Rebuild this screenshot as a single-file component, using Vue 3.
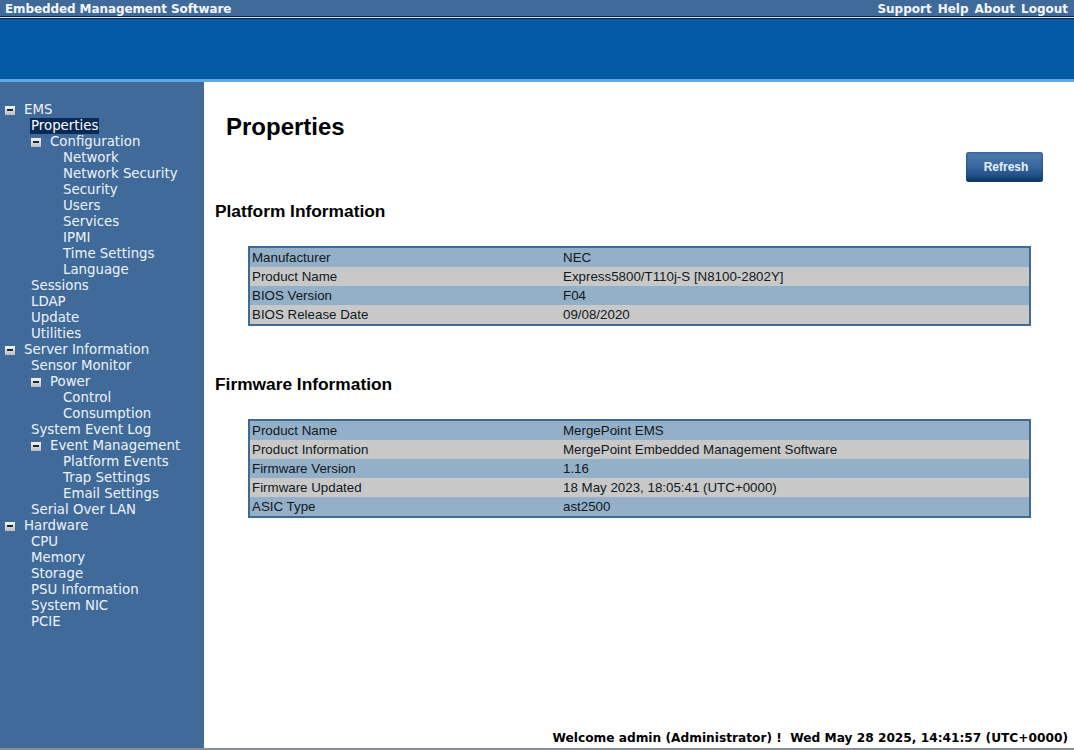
<script setup>
const tree = [
  { label: 'EMS', level: 0, toggle: true },
  { label: 'Properties', level: 1, selected: true },
  { label: 'Configuration', level: 1, toggle: true },
  { label: 'Network', level: 2 },
  { label: 'Network Security', level: 2 },
  { label: 'Security', level: 2 },
  { label: 'Users', level: 2 },
  { label: 'Services', level: 2 },
  { label: 'IPMI', level: 2 },
  { label: 'Time Settings', level: 2 },
  { label: 'Language', level: 2 },
  { label: 'Sessions', level: 1 },
  { label: 'LDAP', level: 1 },
  { label: 'Update', level: 1 },
  { label: 'Utilities', level: 1 },
  { label: 'Server Information', level: 0, toggle: true },
  { label: 'Sensor Monitor', level: 1 },
  { label: 'Power', level: 1, toggle: true },
  { label: 'Control', level: 2 },
  { label: 'Consumption', level: 2 },
  { label: 'System Event Log', level: 1 },
  { label: 'Event Management', level: 1, toggle: true },
  { label: 'Platform Events', level: 2 },
  { label: 'Trap Settings', level: 2 },
  { label: 'Email Settings', level: 2 },
  { label: 'Serial Over LAN', level: 1 },
  { label: 'Hardware', level: 0, toggle: true },
  { label: 'CPU', level: 1 },
  { label: 'Memory', level: 1 },
  { label: 'Storage', level: 1 },
  { label: 'PSU Information', level: 1 },
  { label: 'System NIC', level: 1 },
  { label: 'PCIE', level: 1 },
]

const topLinks = ['Support', 'Help', 'About', 'Logout']

const platform = [
  ['Manufacturer', 'NEC'],
  ['Product Name', 'Express5800/T110j-S [N8100-2802Y]'],
  ['BIOS Version', 'F04'],
  ['BIOS Release Date', '09/08/2020'],
]

const firmware = [
  ['Product Name', 'MergePoint EMS'],
  ['Product Information', 'MergePoint Embedded Management Software'],
  ['Firmware Version', '1.16'],
  ['Firmware Updated', '18 May 2023, 18:05:41 (UTC+0000)'],
  ['ASIC Type', 'ast2500'],
]

const sections = [
  { title: 'Platform Information', rows: platform },
  { title: 'Firmware Information', rows: firmware },
]
</script>

<template>
  <div class="page">
    <header class="topbar">
      <span class="brand">Embedded Management Software</span>
      <nav class="toplinks">
        <a v-for="link in topLinks" :key="link" href="#" @click.prevent>{{ link }}</a>
      </nav>
    </header>
    <div class="banner"></div>

    <div class="body">
      <aside class="sidebar">
        <div v-for="item in tree" :key="item.label" class="node" :class="`level-${item.level}`">
          <span v-if="item.toggle" class="toggle"></span>
          <span class="label" :class="{ selected: item.selected }">{{ item.label }}</span>
        </div>
      </aside>

      <main class="content">
        <h1>Properties</h1>
        <div class="actions">
          <button class="refresh" type="button">Refresh</button>
        </div>

        <section v-for="section in sections" :key="section.title" class="section">
          <h2>{{ section.title }}</h2>
          <table class="info">
            <tbody>
              <tr v-for="row in section.rows" :key="row[0]">
                <td class="key">{{ row[0] }}</td>
                <td>{{ row[1] }}</td>
              </tr>
            </tbody>
          </table>
        </section>

        <div class="status">Welcome admin (Administrator) !&nbsp; Wed May 28 2025, 14:41:57 (UTC+0000)</div>
      </main>
    </div>
    <div class="bottom-line"></div>
  </div>
</template>

<style>
html,
body {
  margin: 0;
  background: #fff;
}
</style>

<style scoped>
.page {
  display: flex;
  flex-direction: column;
  height: 750px;
  overflow: hidden;
  font-family: "DejaVu Sans", Verdana, sans-serif;
}

.topbar {
  display: flex;
  justify-content: space-between;
  align-items: center;
  box-sizing: border-box;
  height: 16px;
  padding: 2px 6px 0 5px;
  background: #3f6a99;
  color: #f2f7fb;
  font-size: 12px;
  font-weight: bold;
}

.brand {
  letter-spacing: -0.1px;
}

.toplinks {
  display: flex;
  gap: 6px;
}

.toplinks a {
  color: inherit;
  text-decoration: none;
}

.banner {
  box-sizing: border-box;
  height: 66px;
  background: #025aa5;
  border-bottom: 3px solid #5ea9de;
  box-shadow: inset 0 1px 0 #10233f, inset 0 2px 0 #dbe5ee, inset 0 3px 0 #10233f;
}

.body {
  display: flex;
  flex: 1;
  min-height: 0;
}

.sidebar {
  box-sizing: border-box;
  width: 204px;
  padding-top: 20px;
  background: #3f6a99;
  color: #eef4fa;
  font-size: 13.33px;
}

.node {
  display: flex;
  align-items: center;
  height: 16px;
  white-space: nowrap;
}

.level-0 {
  padding-left: 5px;
}

.level-1 {
  padding-left: 31px;
}

.level-2 {
  padding-left: 63px;
}

.toggle {
  position: relative;
  box-sizing: border-box;
  width: 10px;
  height: 9px;
  margin-right: 9px;
  background: linear-gradient(#f4f4f4, #b9bec4);
}

.toggle::after {
  content: "";
  position: absolute;
  left: 2px;
  right: 2px;
  top: 3px;
  height: 2px;
  background: #1b2530;
}

.label {
  line-height: 16px;
}

.selected {
  margin-left: -1px;
  padding: 0 1px;
  background: #0a2a56;
  color: #fff;
}

.content {
  display: flex;
  flex-direction: column;
  flex: 1;
  min-width: 0;
  box-sizing: border-box;
  padding: 0 6px 0 11px;
  color: #000;
  font-family: "Liberation Sans", Arial, sans-serif;
}

h1 {
  margin: 31px 0 0 11px;
  font-size: 24px;
  line-height: 28px;
  font-weight: bold;
}

.actions {
  display: flex;
  justify-content: flex-end;
  margin-top: 11px;
  padding-right: 25px;
}

.refresh {
  width: 77px;
  height: 30px;
  padding: 0 0 0 3px;
  border: 0;
  border-radius: 3px;
  background: linear-gradient(#4f7cae 0%, #3a6a9f 45%, #24548b 75%, #0c3263 100%);
  box-shadow: inset 0 0 3px #1c4676;
  color: #e6f2fb;
  font-family: "Liberation Sans", Arial, sans-serif;
  font-size: 12px;
  font-weight: bold;
}

.section h2 {
  margin: 0;
  font-size: 17.33px;
  line-height: 20px;
  font-weight: bold;
}

.section:nth-of-type(1) h2 {
  margin-top: 19px;
}

.section + .section h2 {
  margin-top: 48px;
}

.info {
  box-sizing: border-box;
  width: 783px;
  margin: 25px 0 0 33px;
  border: 2px solid #3f6a94;
  border-collapse: collapse;
  font-size: 13.33px;
  color: #101820;
}

.info td {
  height: 19px;
  padding: 0 0 0 2px;
}

.info .key {
  width: 309px;
}

.info tr:nth-child(odd) {
  background: #94afc8;
}

.info tr:nth-child(even) {
  background: #c8c8c8;
}

.status {
  margin-top: auto;
  margin-bottom: 2px;
  text-align: right;
  font-family: "DejaVu Sans", Verdana, sans-serif;
  font-size: 12.2px;
  font-weight: bold;
  line-height: 16px;
  white-space: nowrap;
}

.bottom-line {
  height: 2px;
  background: #8b8f94;
}
</style>
